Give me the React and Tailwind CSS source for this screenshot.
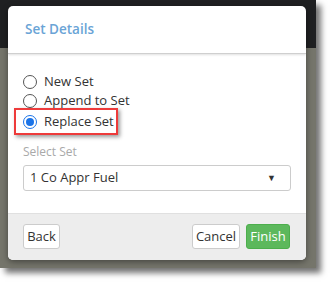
import React from 'react';

function Radio({ label, checked }) {
    return (
        <label className="flex items-center gap-[7px] h-5 text-[13px] text-[#333]">
            <span
                className={`w-[14px] h-[14px] rounded-full border flex items-center justify-center bg-white ${checked ? 'border-[#1a73e8]' : 'border-[#555]'}`}
            >
                {checked && <span className="w-[8px] h-[8px] rounded-full bg-[#1a73e8]" />}
            </span>
            <span>{label}</span>
        </label>
    );
}

export default function App() {
    return (
        <div className="w-[330px] h-[283px] bg-white" style={{ fontFamily: '"Open Sans", "Liberation Sans", sans-serif' }}>
            <div className="relative w-[316px] h-[268px] shadow-[5px_5px_6px_rgba(0,0,0,0.55)] flex flex-col">
                <div className="h-[48px] bg-[#1f2022]" />
                <div className="flex-1 bg-[#75756b]" />

                <div className="absolute left-[8px] top-[6px] w-[298px] h-[254px] bg-white rounded-[5px] flex flex-col overflow-hidden shadow-[0_2px_6px_rgba(0,0,0,0.4)]">
                    <div className="h-[48px] flex items-center pl-[17px] border-b border-[#cfcfcf] shadow-[0_1px_2px_rgba(0,0,0,0.12)]">
                        <span className="text-[13.5px] font-semibold text-[#6aa4d6]">Set Details</span>
                    </div>

                    <div className="flex-1 flex flex-col pl-[15px] pr-[15px] pt-[18px]">
                        <Radio label="New Set" />
                        <div className="-mt-[1px]">
                            <Radio label="Append to Set" />
                        </div>
                        <div className="-ml-[9px] -mt-[3px] w-[104px] h-[27px] border-2 border-[#ee3b3b] pl-[7px] flex items-center shadow-[2px_2px_4px_rgba(0,0,0,0.4)]">
                            <Radio label="Replace Set" checked />
                        </div>
                        <div className="mt-[9px] text-[12px] text-[#a9a9a9] leading-[16px]">Select Set</div>
                        <div className="mt-[5px] w-[268px] h-[26px] border border-[#cccccc] rounded-[3px] flex items-center justify-between pl-[6px] pr-[14px] text-[13px] text-[#333]">
                            <span>1 Co Appr Fuel</span>
                            <span className="text-[9px] text-[#333]">▼</span>
                        </div>
                    </div>

                    <div className="h-[47px] bg-[#ededed] border-t border-[#e0e0e0] flex items-start pt-[10px] pl-[15px] pr-[16px]">
                        <button className="h-[25px] w-[37px] bg-white border border-[#cccccc] rounded-[3px] text-[13px] text-[#333]">Back</button>
                        <div className="ml-auto flex gap-[6px]">
                            <button className="h-[25px] w-[48px] bg-white border border-[#cccccc] rounded-[3px] text-[13px] text-[#333]">Cancel</button>
                            <button className="h-[25px] w-[44px] bg-[#5cb85c] border border-[#4cae4c] rounded-[3px] text-[13px] text-white">Finish</button>
                        </div>
                    </div>
                </div>
            </div>
        </div>
    );
}
